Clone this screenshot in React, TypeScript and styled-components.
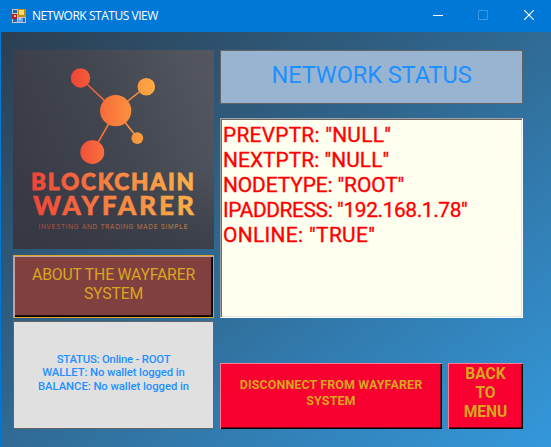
import React from 'react';
import styled, { createGlobalStyle } from 'styled-components';

const GlobalStyle = createGlobalStyle`
  * { box-sizing: border-box; }
  body { margin: 0; overflow: hidden; }
`;

const Window = styled.div`
  width: 551px;
  height: 447px;
  display: flex;
  flex-direction: column;
  font-family: Roboto, 'Liberation Sans', sans-serif;
  background: #0078d7;
`;

const TitleBar = styled.header`
  height: 32px;
  flex: none;
  display: flex;
  align-items: center;
  padding: 0 1px 0 12px;
  background: #0078d7;
  color: #fff;
`;

const Title = styled.h1`
  margin: 0 auto 0 6px;
  font: 400 12px/16px 'Open Sans', 'Noto Sans', sans-serif;
  letter-spacing: -0.46px;
  white-space: nowrap;
`;

const Caption = styled.button`
  width: 45.5px;
  height: 32px;
  display: grid;
  place-items: center;
  padding: 0 0 2px 3px;
  border: 0;
  background: none;
  color: inherit;
`;

const Client = styled.main`
  flex: 1;
  display: grid;
  grid-template-columns: 201px 303px;
  column-gap: 6px;
  align-items: start;
  margin-left: 1px;
  padding: 18px 0 0 12px;
  background: linear-gradient(to bottom right, #2c3e50, #3498db);
`;

const Column = styled.div`
  display: flex;
  flex-direction: column;
`;

const Logo = styled.svg`
  display: block;
  width: 201px;
  height: 199px;
`;

const Line = styled.span<{ $spacing: number }>`
  display: block;
  letter-spacing: ${(p) => p.$spacing}px;
  white-space: nowrap;
`;

const AboutButton = styled.button`
  height: 63px;
  margin-top: 6px;
  padding: 0 0 6px;
  border: 1px solid #daa520;
  background: #804040;
  box-shadow: inset 1px 1px #c9a3a3, inset -1px -1px #000, inset -2px -2px #201010;
  color: #daa520;
  font: 400 15.8px/19px Roboto, sans-serif;
`;

const StatusPanel = styled.section`
  height: 108px;
  margin-top: 3px;
  display: flex;
  flex-direction: column;
  justify-content: center;
  align-items: center;
  padding-bottom: 4px;
  border: 1px solid #646464;
  background: #e0e0e0;
  color: #1e90ff;
  font-size: 11.3px;
  font-weight: 500;
  line-height: 13.5px;
`;

const Heading = styled.h2`
  height: 54px;
  margin: 0;
  display: flex;
  justify-content: center;
  border: 1px solid #646464;
  background: #99b4d1;
  color: #1e90ff;
  font-size: 23.6px;
  font-weight: 400;
  line-height: 49px;
`;

const Listing = styled.div`
  height: 200px;
  margin-top: 14px;
  padding: 4px 2px;
  border: 1px solid;
  border-color: #a0a0a0 #fff #fff #a0a0a0;
  background: #fffff0;
  box-shadow: inset 1px 1px #696969, inset -1px -1px #e3e3e3;
  color: #f00;
  font-size: 20.9px;
  font-weight: 400;
  line-height: 25px;
  -webkit-text-stroke: 0.35px #f00;
`;

const Actions = styled.div`
  display: flex;
  gap: 6px;
  margin-top: 45px;
`;

const ActionButton = styled.button<{ $width: number; $size: number; $leading: number; $lift: number }>`
  width: ${(p) => p.$width}px;
  height: 66px;
  padding: 0 0 ${(p) => p.$lift}px;
  border: 0;
  background: #f80030;
  box-shadow: inset 1px 1px #fb7f97, inset -1px -1px #000, inset -2px -2px #7c0018;
  color: #daa520;
  font: 700 ${(p) => p.$size}px/${(p) => p.$leading}px Roboto, sans-serif;
`;

const entries: [string, number][] = [
  ['PREVPTR: "NULL"', 0.25],
  ['NEXTPTR: "NULL"', 0.05],
  ['NODETYPE: "ROOT"', -0.1],
  ['IPADDRESS: "192.168.1.78"', -0.38],
  ['ONLINE: "TRUE"', 0.35],
];

function FormIcon() {
  return (
    <svg width="14" height="14" viewBox="0 0 14 14">
      <path fill="#c6c6c6" d="M0 0h14v14H0z" />
      <path fill="#1768b5" d="M1 1h4v3H1zM1 10h4v3H1zM6 9h7v4H6z" />
      <path fill="#b32020" d="M0 5h5v5H0z" />
      <path fill="#f4b0a0" d="M2 6h2v2H2z" />
      <path fill="#c88b12" d="M6 0h8v8H6z" />
      <path fill="#ffe16b" d="M7 1h5v5H7z" />
      <path fill="#6ea3f3" d="M6 9h5v4H6z" />
      <path fill="#a9cbff" d="M7 9h2v2H7z" />
    </svg>
  );
}

function WayfarerLogo() {
  return (
    <Logo viewBox="0 0 201 199" role="img" aria-label="Blockchain Wayfarer">
      <defs>
        <linearGradient id="slate" x1="0" y1="0.65" x2="1" y2="0.25">
          <stop offset="0" stopColor="#383a46" />
          <stop offset="0.55" stopColor="#434750" />
          <stop offset="1" stopColor="#53565f" />
        </linearGradient>
        <linearGradient id="shade" x1="0" y1="0" x2="0" y2="1">
          <stop offset="0.6" stopColor="#343742" stopOpacity="0" />
          <stop offset="1" stopColor="#343742" stopOpacity="0.6" />
        </linearGradient>
        <linearGradient id="ember" gradientUnits="userSpaceOnUse" x1="58" y1="0" x2="143" y2="0">
          <stop offset="0" stopColor="#f04438" />
          <stop offset="0.5" stopColor="#fa7c3c" />
          <stop offset="1" stopColor="#fcad43" />
        </linearGradient>
        <linearGradient id="word" gradientUnits="userSpaceOnUse" x1="19" y1="0" x2="181" y2="0">
          <stop offset="0" stopColor="#f04438" />
          <stop offset="0.5" stopColor="#f98442" />
          <stop offset="1" stopColor="#fbb049" />
        </linearGradient>
      </defs>
      <path fill="url(#slate)" d="M0 0h201v199H0z" />
      <path fill="url(#shade)" d="M0 0h201v199H0z" />
      <path d="M67.5 28l35 33M133 36.500l-30 24M103 61l21.500 27M103 61l-24 42" stroke="url(#ember)" strokeWidth="1.6" fill="none" />
      <g fill="url(#ember)">
        <circle cx="67.500" cy="28" r="9.700" />
        <circle cx="133.300" cy="36.700" r="8.800" />
        <circle cx="102.700" cy="60.700" r="15.600" />
        <circle cx="124.300" cy="88.100" r="5.900" />
        <circle cx="79.300" cy="102.200" r="11.900" />
      </g>
      <g fill="url(#word)" stroke="url(#word)" fontFamily="Lato, sans-serif" fontWeight="900">
        <text x="18" y="140.200" fontSize="22.500" strokeWidth="0.8" textLength="163" lengthAdjust="spacing">BLOCKCHAIN</text>
        <text x="20" y="164.600" fontSize="26.500" strokeWidth="0.4" textLength="161" lengthAdjust="spacing">WAYFARER</text>
      </g>
      <text x="25.500" y="179" fontSize="6.500" fontFamily="Inter, sans-serif" fontWeight="300" fill="url(#word)" opacity="0.8" textLength="149" lengthAdjust="spacing">
        INVESTING AND TRADING MADE SIMPLE
      </text>
    </Logo>
  );
}

export default function App() {
  return (
    <Window>
      <GlobalStyle />
      <TitleBar>
        <FormIcon />
        <Title>NETWORK STATUS VIEW</Title>
        <Caption aria-label="Minimize">
          <svg width="10" height="10"><path d="M0 5.500h10" stroke="#fff" /></svg>
        </Caption>
        <Caption aria-label="Maximize" disabled>
          <svg width="10" height="10"><path d="M.5.5h9v9h-9z" fill="none" stroke="#3a98e3" /></svg>
        </Caption>
        <Caption aria-label="Close">
          <svg width="10" height="10"><path d="M0 0l10 10M10 0L0 10" stroke="#fff" strokeWidth="1.200" /></svg>
        </Caption>
      </TitleBar>
      <Client>
        <Column>
          <WayfarerLogo />
          <AboutButton>
            <Line $spacing={-0.2}>ABOUT THE WAYFARER</Line>
            <Line $spacing={-0.2}>SYSTEM</Line>
          </AboutButton>
          <StatusPanel>
            <Line $spacing={-0.2}>STATUS: Online - ROOT</Line>
            <Line $spacing={-0.1}>WALLET: No wallet logged in</Line>
            <Line $spacing={-0.05}>BALANCE: No wallet logged in</Line>
          </StatusPanel>
        </Column>
        <Column>
          <Heading><Line $spacing={-0.1}>NETWORK STATUS</Line></Heading>
          <Listing>
            {entries.map(([text, spacing]) => <Line key={text} $spacing={spacing}>{text}</Line>)}
          </Listing>
          <Actions>
            <ActionButton $width={222} $size={12.5} $leading={16} $lift={7}>
              <Line $spacing={0.1}>DISCONNECT FROM WAYFARER</Line>
              <Line $spacing={0.1}>SYSTEM</Line>
            </ActionButton>
            <ActionButton $width={75} $size={15.6} $leading={19} $lift={6}>
              <Line $spacing={0}>BACK</Line>
              <Line $spacing={0}>TO</Line>
              <Line $spacing={0}>MENU</Line>
            </ActionButton>
          </Actions>
        </Column>
      </Client>
    </Window>
  );
}
